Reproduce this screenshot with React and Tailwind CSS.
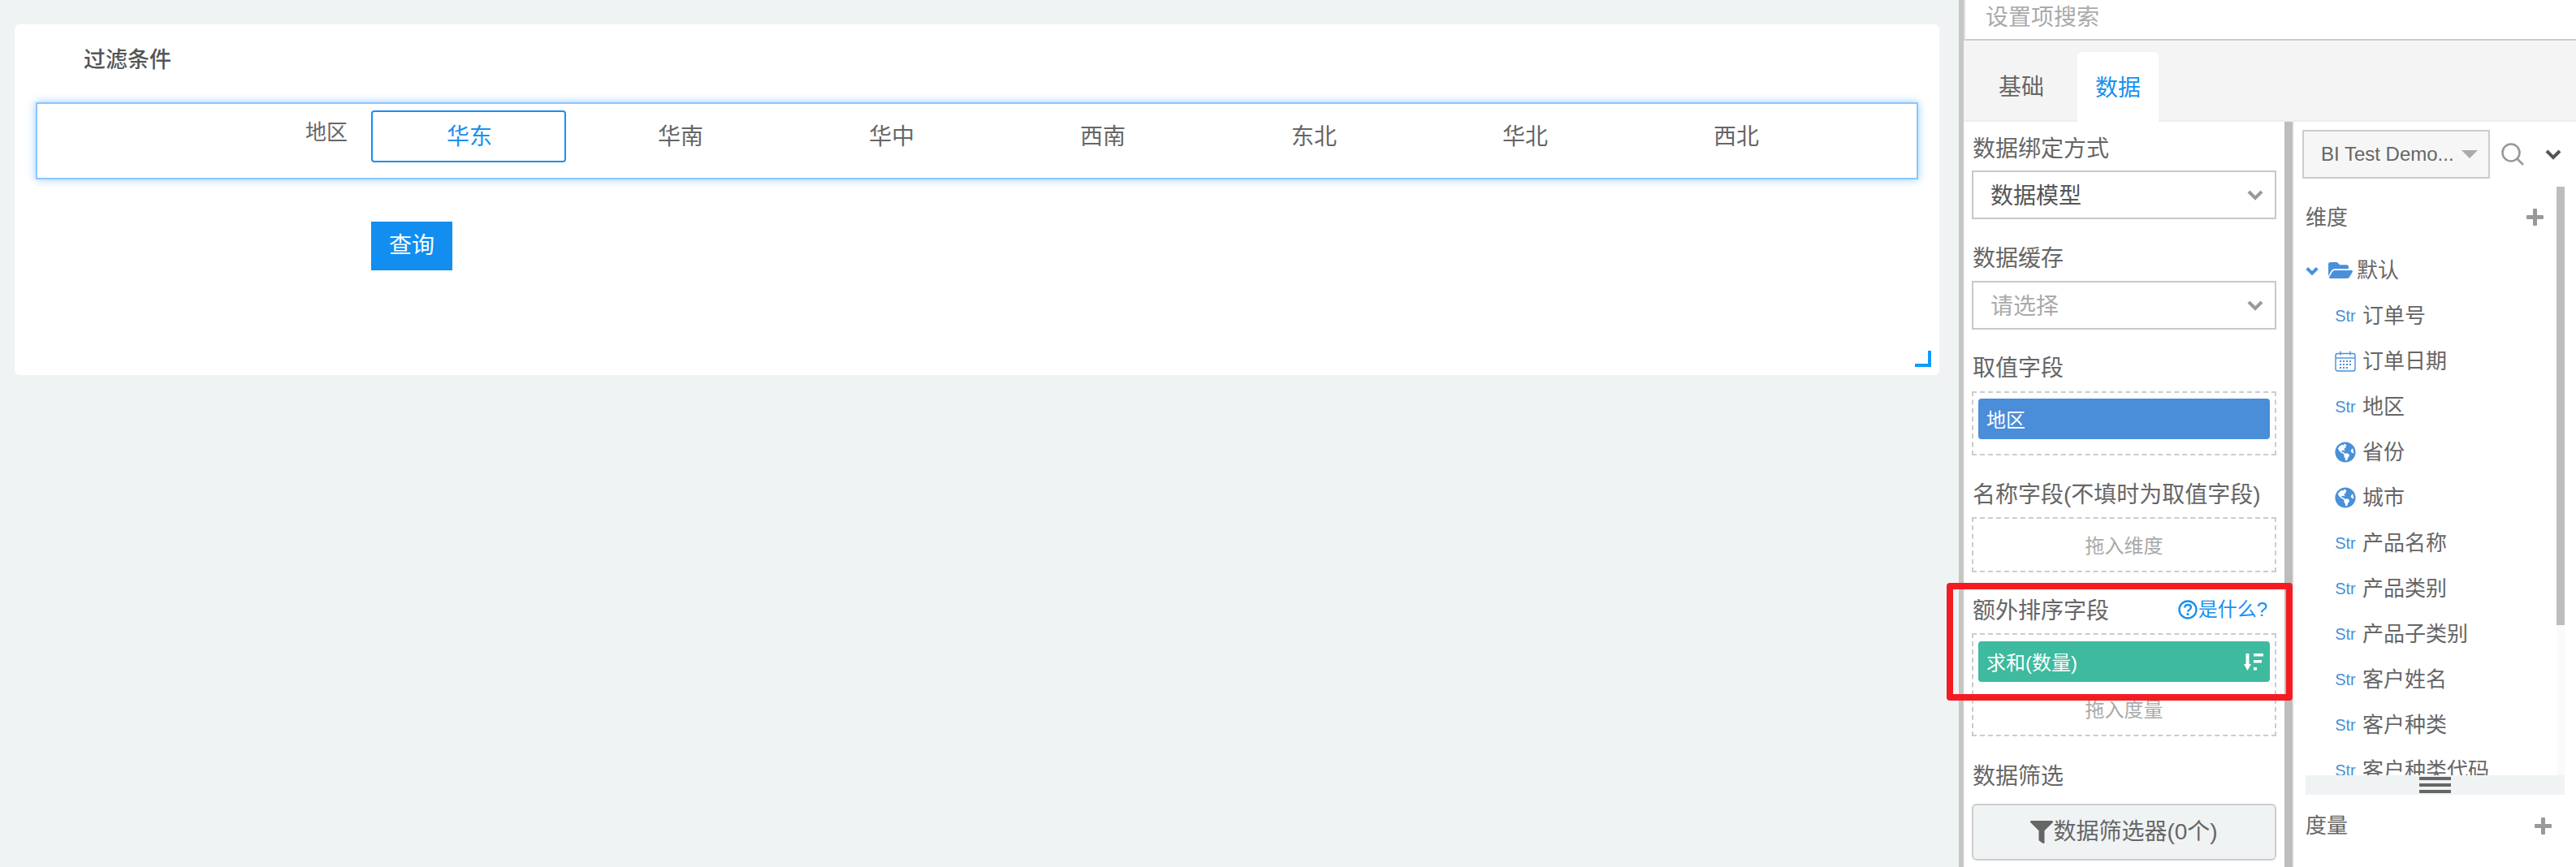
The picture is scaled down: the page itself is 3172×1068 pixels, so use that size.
import { FaFilter, FaFolderOpen, FaGlobeAmericas } from 'react-icons/fa';

const regions = ['华东', '华南', '华中', '西南', '东北', '华北', '西北'];

const dimensions = [
  { name: '订单号', type: 'str' },
  { name: '订单日期', type: 'date' },
  { name: '地区', type: 'str' },
  { name: '省份', type: 'geo' },
  { name: '城市', type: 'geo' },
  { name: '产品名称', type: 'str' },
  { name: '产品类别', type: 'str' },
  { name: '产品子类别', type: 'str' },
  { name: '客户姓名', type: 'str' },
  { name: '客户种类', type: 'str' },
  { name: '客户种类代码', type: 'str' },
];

function Chevron({ className, weight = 4 }) {
  return (
    <svg viewBox="0 0 20 14" fill="none" stroke="currentColor" strokeWidth={weight} className={className}>
      <polyline points="2,3 10,11 18,3" />
    </svg>
  );
}

function Plus() {
  return (
    <svg viewBox="0 0 21 21" className="w-[21px] h-[21px] text-[#999]" fill="currentColor">
      <rect x="8" y="0" width="5" height="21" rx="1" />
      <rect x="0" y="8" width="21" height="5" rx="1" />
    </svg>
  );
}

function CalendarIcon() {
  return (
    <svg viewBox="0 0 26 26" className="w-[26px] h-[26px] text-[#4a90d9]" fill="none" stroke="currentColor" strokeWidth="1.4">
      <rect x="1" y="3.5" width="24" height="21.5" rx="2.5" />
      <line x1="1" y1="9" x2="25" y2="9" />
      <line x1="7" y1="0.5" x2="7" y2="5.5" />
      <line x1="19" y1="0.5" x2="19" y2="5.5" />
      <g stroke="none" fill="currentColor">
        <rect x="6" y="12" width="2" height="2" />
        <rect x="10" y="12" width="2" height="2" />
        <rect x="14" y="12" width="2" height="2" />
        <rect x="18" y="12" width="2" height="2" />
        <rect x="6" y="16" width="2" height="2" />
        <rect x="10" y="16" width="2" height="2" />
        <rect x="14" y="16" width="2" height="2" />
        <rect x="18" y="16" width="2" height="2" />
        <rect x="6" y="20" width="2" height="2" />
        <rect x="10" y="20" width="2" height="2" />
        <rect x="14" y="20" width="2" height="2" />
      </g>
    </svg>
  );
}

function SortIcon() {
  return (
    <svg viewBox="0 0 24 21" className="w-[24px] h-[21px] text-white" fill="currentColor">
      <rect x="2.5" y="0" width="4" height="15" />
      <polygon points="0,13 9,13 4.5,21" />
      <rect x="12" y="0" width="12" height="3.5" />
      <rect x="12" y="8" width="10" height="3.5" />
      <rect x="12" y="17" width="4" height="3.5" />
    </svg>
  );
}

function HelpIcon() {
  return (
    <svg viewBox="0 0 24 24" className="w-[24px] h-[24px] text-[#1890f0]" fill="none" stroke="currentColor">
      <circle cx="12" cy="12" r="10.5" strokeWidth="2.4" />
      <path d="M8.2 9.6c0-2.3 1.7-3.6 3.9-3.6 2.2 0 3.8 1.3 3.8 3.2 0 2.9-3.9 2.9-3.9 5.6" strokeWidth="2.4" />
      <rect x="10.6" y="16.2" width="2.8" height="2.8" fill="currentColor" stroke="none" />
    </svg>
  );
}

function Select({ children, muted }) {
  return (
    <div className="h-[60px] border-2 border-[#c8c8c8] flex items-center justify-between pl-[21px] pr-[14px]">
      <span className={`text-[28px] pt-[3px] ${muted ? 'text-[#aaa]' : 'text-[#555]'}`}>{children}</span>
      <Chevron className="w-[20px] h-[14px] text-[#999]" />
    </div>
  );
}

function Label({ children, className }) {
  return <div className={`h-[40px] leading-[43px] text-[28px] text-[#666] pl-px whitespace-nowrap ${className}`}>{children}</div>;
}

function Pill({ color, children, icon }) {
  return (
    <div className={`h-[50px] rounded-[4px] ${color} flex items-center justify-between pl-[10px] pr-[8px] text-[24px] text-white`}>
      <span className="pt-[3px]">{children}</span>
      {icon}
    </div>
  );
}

function TypeIcon({ type }) {
  if (type === 'date') return <CalendarIcon />;
  if (type === 'geo') return <FaGlobeAmericas className="w-[26px] h-[26px] text-[#4a90d9]" />;
  return <span className="text-[20px] leading-none text-[#4a90d9]">Str</span>;
}

export default function App() {
  return (
    <div className="relative flex w-[3172px] h-[1068px] overflow-hidden bg-[#eff3f4] [font-family:'Liberation_Sans','Noto_Sans_CJK_SC',sans-serif]">
      {/* Canvas */}
      <div className="w-[2412px] shrink-0 pt-[30px] pl-[18px] pr-[24px]">
        <div className="relative h-[432px] bg-white rounded-[6px] pl-[26px] pr-[26px]">
          <div className="pl-[59px] pt-[24px] h-[96px] text-[27px] leading-[40px] font-medium text-[#555]">过滤条件</div>
          <div className="h-[95px] border-2 border-[#8cc5fb] shadow-[0_0_10px_rgba(24,144,255,0.45)] flex items-start pt-[8px]">
            <div className="w-[382px] shrink-0 text-right text-[26px] leading-[38px] pt-[8px] text-[#666]">地区</div>
            <div className="flex gap-[20px] ml-[29px]">
              {regions.map((r, i) => (
                <div
                  key={r}
                  className={`w-[240px] h-[64px] pt-[2px] pl-[2px] flex items-center justify-center text-[28px] rounded-[4px] border-2 ${
                    i === 0 ? 'border-[#1890f0] text-[#1890f0]' : 'border-transparent text-[#666]'
                  }`}
                >
                  {r}
                </div>
              ))}
            </div>
          </div>
          <div className="ml-[413px] mt-[52px] w-[100px] h-[60px] bg-[#118ef0] text-white text-[28px] flex items-center justify-center">查询</div>
          <div className="absolute left-[2340px] top-[402px] w-[20px] h-[20px] border-r-4 border-b-4 border-[#0a9dff]" />
        </div>
      </div>

      <div className="w-[6px] shrink-0 bg-[#c6c6c6]" />

      {/* Settings */}
      <div className="flex-1 flex flex-col bg-white">
        <div className="h-[50px] shrink-0 border-l-2 border-b-2 border-l-[#ddd] border-b-[#ccc] pl-[25px] pb-[4px] flex items-center text-[28px] text-[#aaa]">设置项搜索</div>
        <div className="h-[100px] shrink-0 bg-[#f4f4f4] border-b-2 border-[#eee] flex items-end pl-[43px] text-[28px]">
          <div className="w-[56px] mr-[41px] h-[86px] leading-[92px] text-[#666]">基础</div>
          <div className="w-[100px] h-[86px] -mb-[2px] leading-[90px] text-center bg-white rounded-t-[6px] text-[#1890f0]">数据</div>
        </div>

        <div className="flex-1 flex min-h-0">
          {/* Binding column */}
          <div className="w-[395px] shrink-0 pl-[10px] pr-[10px] pt-[12px]">
            <Label className="mb-[8px]">数据绑定方式</Label>
            <Select>数据模型</Select>
            <Label className="mt-[27px] mb-[9px]">数据缓存</Label>
            <Select muted>请选择</Select>
            <Label className="mt-[26px] mb-[10px]">取值字段</Label>
            <div className="h-[79px] border-2 border-dashed border-[#ccc] px-[6px] pt-[7px]">
              <Pill color="bg-[#4a8dd8]">地区</Pill>
            </div>
            <Label className="mt-[27px] mb-[9px]">名称字段(不填时为取值字段)</Label>
            <div className="h-[68px] pt-[3px] border-2 border-dashed border-[#ccc] flex items-center justify-center text-[24px] text-[#aaa]">拖入维度</div>
            <div className="mt-[26px] mb-[9px] flex items-center justify-between pr-[11px]">
              <Label>额外排序字段</Label>
              <div className="flex items-center text-[24px] text-[#1890f0]">
                <HelpIcon />
                <span className="ml-px">是什么?</span>
              </div>
            </div>
            <div className="h-[127px] border-2 border-dashed border-[#ccc] px-[6px] pt-[8px]">
              <Pill color="bg-[#3eba9f]" icon={<SortIcon />}>求和(数量)</Pill>
              <div className="h-[64px] pt-[6px] flex items-center justify-center text-[24px] text-[#aaa]">拖入度量</div>
            </div>
            <Label className="mt-[28px] mb-[15px]">数据筛选</Label>
            <div className="h-[70px] border-2 border-[#ccc] rounded-[6px] bg-[#eff3f4] flex items-center justify-center text-[28px] text-[#666]">
              <FaFilter className="w-[28px] h-[28px] text-[#666]" />
              <span>数据筛选器(0个)</span>
            </div>
          </div>

          <div className="w-[10px] shrink-0 bg-[#bdbdbd]" />
          <div className="w-[2px] shrink-0 bg-[#eee]" />

          {/* Field list */}
          <div className="flex-1 pt-[10px] pl-[10px] pr-[14px] min-w-0">
            <div className="h-[60px] flex items-center">
              <div className="w-[231px] h-[60px] shrink-0 bg-[#f6f6f6] border-2 border-[#ccc] flex items-center pl-[21px] text-[24px] text-[#666] whitespace-nowrap">
                <span>BI Test Demo...</span>
                <span className="ml-[9px] w-0 h-0 border-x-[10px] border-x-transparent border-t-[10px] border-t-[#aaa]" />
              </div>
              <svg viewBox="0 0 28 28" className="ml-[14px] w-[28px] h-[28px] text-[#999]" fill="none" stroke="currentColor" strokeWidth="2.6">
                <circle cx="12" cy="12" r="10.5" />
                <line x1="19.5" y1="19.5" x2="27" y2="27" />
              </svg>
              <Chevron className="ml-[26px] w-[20px] h-[14px] text-[#555]" />
            </div>

            <div className="mt-[10px] ml-[4px] flex h-[725px]">
              <div className="flex-1 min-w-0 overflow-hidden">
                <div className="h-[75px] flex items-center justify-between pr-[16px] text-[26px] text-[#666]">
                  <span className="pt-[2px]">维度</span>
                  <Plus />
                </div>
                <div className="h-[56px] flex items-center text-[26px] text-[#666]">
                  <Chevron weight={5} className="w-[16px] h-[11px] text-[#4a90d9]" />
                  <FaFolderOpen className="ml-[12px] w-[30px] h-[30px] text-[#4a90d9]" />
                  <span className="ml-[5px]">默认</span>
                </div>
                {dimensions.map(d => (
                  <div key={d.name} className="h-[56px] flex items-center pl-[36px] text-[26px] text-[#666]">
                    <div className="w-[26px] mr-[8px] shrink-0 flex items-center justify-center">
                      <TypeIcon type={d.type} />
                    </div>
                    <span>{d.name}</span>
                  </div>
                ))}
              </div>
              <div className="w-[10px] shrink-0 bg-[#fafafa]">
                <div className="h-[540px] bg-[#bdbdbd]" />
              </div>
            </div>

            <div className="ml-[4px] h-[24px] bg-[#eff3f4] flex flex-col items-center justify-center gap-[4px]">
              <div className="w-[39px] h-[4px] bg-[#666]" />
              <div className="w-[39px] h-[4px] bg-[#666]" />
              <div className="w-[39px] h-[4px] bg-[#666]" />
            </div>
            <div className="ml-[4px] h-[76px] flex items-center justify-between pr-[16px] text-[26px] text-[#666]">
              <span>度量</span>
              <Plus />
            </div>
          </div>
        </div>
      </div>

      {/* Red highlight annotation */}
      <div className="absolute left-[2397px] top-[718px] w-[426px] h-[145px] border-8 border-[#f41c22] rounded-[4px] pointer-events-none" />
    </div>
  );
}
